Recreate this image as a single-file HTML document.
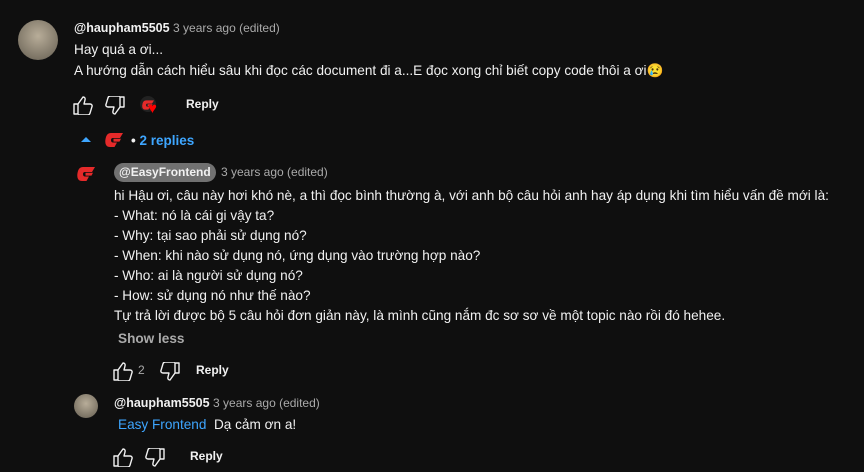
<!DOCTYPE html>
<html><head><meta charset="utf-8"><style>
*{margin:0;padding:0;box-sizing:border-box}
body{width:864px;height:472px;background:#0f0f0f;color:#f1f1f1;font-family:"Liberation Sans",Roboto,Arial,sans-serif;position:relative;overflow:hidden}
.a{position:absolute;white-space:nowrap}
.nm{font-size:12.5px;font-weight:bold;color:#f1f1f1}
.tm{font-size:12px;color:#aaa;font-weight:normal}
.t{font-size:13.6px;line-height:20px}
.rp{font-size:12px;font-weight:bold}
.av{position:absolute;border-radius:50%;background:radial-gradient(circle at 50% 40%,#b8ad99,#7d7566 70%,#5e5a50)}
</style></head><body>
<svg width="0" height="0" style="position:absolute"><defs>
<g id="lg"><path d="M6 0H18L15 5H8Q6 5 6 7Q6 9.5 8 9.5H12L9.5 14H5Q0 14 0.3 7.5Q1 0 6 0Z" fill="#e52a2a"/><path d="M8.5 5.8H16L14.5 8.6H8.5Z" fill="#e52a2a"/></g>
<g id="up"><path d="M1 9h4v10H1zM5 9l5-7c1.5 0 2.5 1 2 3l-1 4h6c1.5 0 2.5 1.2 2 2.6l-2 6.6c-.3 1-1 1.8-2.2 1.8H5" fill="none" stroke="#f1f1f1" stroke-width="1.4" stroke-linejoin="round"/></g>
<g id="dn"><path d="M19 11h-4V1h4zM15 11l-5 7c-1.5 0-2.5-1-2-3l1-4H3c-1.5 0-2.5-1.2-2-2.6l2-6.6C3.3.8 4 0 5.2 0H15" fill="none" stroke="#f1f1f1" stroke-width="1.4" stroke-linejoin="round"/></g>
</defs></svg>

<div class="av" style="left:18px;top:20px;width:40px;height:40px"></div>
<div class="a nm" style="left:74px;top:21px">@haupham5505 <span class="tm">3 years ago (edited)</span></div>
<div class="a t" style="left:74px;top:40px">Hay quá a ơi...</div>
<div class="a t" style="left:74px;top:61px">A hướng dẫn cách hiểu sâu khi đọc các document đi a...E đọc xong chỉ biết copy code thôi a ơi😢</div>
<svg class="a" style="left:73px;top:95px" width="20" height="20"><use href="#up"/></svg>
<svg class="a" style="left:105px;top:96px" width="20" height="20"><use href="#dn"/></svg>
<div class="a" style="left:140px;top:96px;width:16px;height:16px;border-radius:50%;background:#222"></div>
<svg class="a" style="left:142px;top:100px" width="12" height="10" viewBox="0 0 18 14"><use href="#lg"/></svg>
<div class="a" style="left:148px;top:102px;color:#ff0000;font-size:15px;line-height:13px">♥</div>
<div class="a rp" style="left:186px;top:97px">Reply</div>

<div class="a" style="left:81px;top:137px;width:0;height:0;border-left:5px solid transparent;border-right:5px solid transparent;border-bottom:5px solid #3ea6ff"></div>
<svg class="a" style="left:105px;top:133px" width="18" height="14" viewBox="0 0 18 14"><use href="#lg"/></svg>
<div class="a" style="left:131px;top:133px;font-size:13.5px;font-weight:bold;color:#3ea6ff"><span style="color:#f1f1f1">•</span> 2 replies</div>

<svg class="a" style="left:77px;top:167px" width="18" height="14" viewBox="0 0 18 14"><use href="#lg"/></svg>
<div class="a nm" style="left:114px;top:163px;height:19px;line-height:19px;padding:0 5px;background:#717171;border-radius:10px;font-size:12px;width:102px">@EasyFrontend</div>
<div class="a tm" style="left:221px;top:165px">3 years ago (edited)</div>
<div class="a t" style="left:114px;top:186px">hi Hậu ơi, câu này hơi khó nè, a thì đọc bình thường à, với anh bộ câu hỏi anh hay áp dụng khi tìm hiểu vấn đề mới là:<br>- What: nó là cái gi vậy ta?<br>- Why: tại sao phải sử dụng nó?<br>- When: khi nào sử dụng nó, ứng dụng vào trường hợp nào?<br>- Who: ai là người sử dụng nó?<br>- How: sử dụng nó như thế nào?<br>Tự trả lời được bộ 5 câu hỏi đơn giản này, là mình cũng nắm đc sơ sơ về một topic nào rồi đó hehee.</div>
<div class="a" style="left:118px;top:331px;font-size:13.6px;font-weight:bold;color:#aaa">Show less</div>
<svg class="a" style="left:113px;top:361px" width="20" height="20"><use href="#up"/></svg>
<div class="a" style="left:138px;top:363px;font-size:12px;color:#aaa">2</div>
<svg class="a" style="left:160px;top:362px" width="20" height="20"><use href="#dn"/></svg>
<div class="a rp" style="left:196px;top:363px">Reply</div>

<div class="av" style="left:74px;top:394px;width:24px;height:24px"></div>
<div class="a nm" style="left:114px;top:396px">@haupham5505 <span class="tm">3 years ago (edited)</span></div>
<div class="a t" style="left:118px;top:415px"><span style="color:#3ea6ff">Easy Frontend</span>&nbsp; Dạ cảm ơn a!</div>
<svg class="a" style="left:113px;top:447px" width="20" height="20"><use href="#up"/></svg>
<svg class="a" style="left:145px;top:448px" width="20" height="20"><use href="#dn"/></svg>
<div class="a rp" style="left:190px;top:449px">Reply</div>
</body></html>
